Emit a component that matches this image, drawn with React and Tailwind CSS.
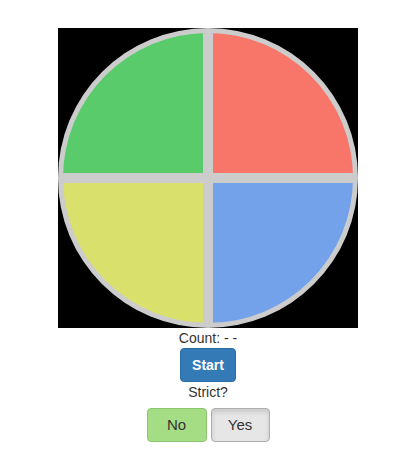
import React from 'react';

function Pad({ color }) {
  return <div className={`w-[140px] h-[140px] ${color}`} />;
}

export default function App() {
  return (
    <div className="flex flex-col items-center pt-[28px] bg-white text-[#333] text-[14px] font-['Liberation_Sans',Arial,sans-serif]">
      {/* Game board */}
      <div className="w-[300px] h-[300px] bg-black flex items-center justify-center">
        <div className="w-[300px] h-[300px] rounded-full bg-[#cccccc] p-[5px]">
          <div className="w-[290px] h-[290px] rounded-full overflow-hidden grid grid-cols-[140px_140px] gap-[10px] bg-[#cccccc]">
            <Pad color="bg-[#5acb6a]" />
            <Pad color="bg-[#f87569]" />
            <Pad color="bg-[#d9e06b]" />
            <Pad color="bg-[#74a2ea]" />
          </div>
        </div>
      </div>

      {/* Controls */}
      <div className="leading-[20px]">Count: - -</div>
      <button
        type="button"
        className="w-[56px] h-[34px] rounded-[4px] bg-[#337ab7] border border-[#2e6da4] text-white font-bold text-[14px]"
      >
        Start
      </button>
      <div className="leading-[20px]">Strict?</div>
      <div className="flex gap-[4px] mt-[6px]">
        <button
          type="button"
          className="w-[60px] h-[34px] rounded-[4px] bg-[#a4dd84] border border-[#8cc56f] text-[#333] text-[15px]"
        >
          No
        </button>
        <button
          type="button"
          className="w-[59px] h-[34px] rounded-[4px] bg-[#e6e6e6] border border-[#adadad] text-[#333] text-[15px] shadow-[inset_0_3px_5px_rgba(0,0,0,0.125)]"
        >
          Yes
        </button>
      </div>
    </div>
  );
}
